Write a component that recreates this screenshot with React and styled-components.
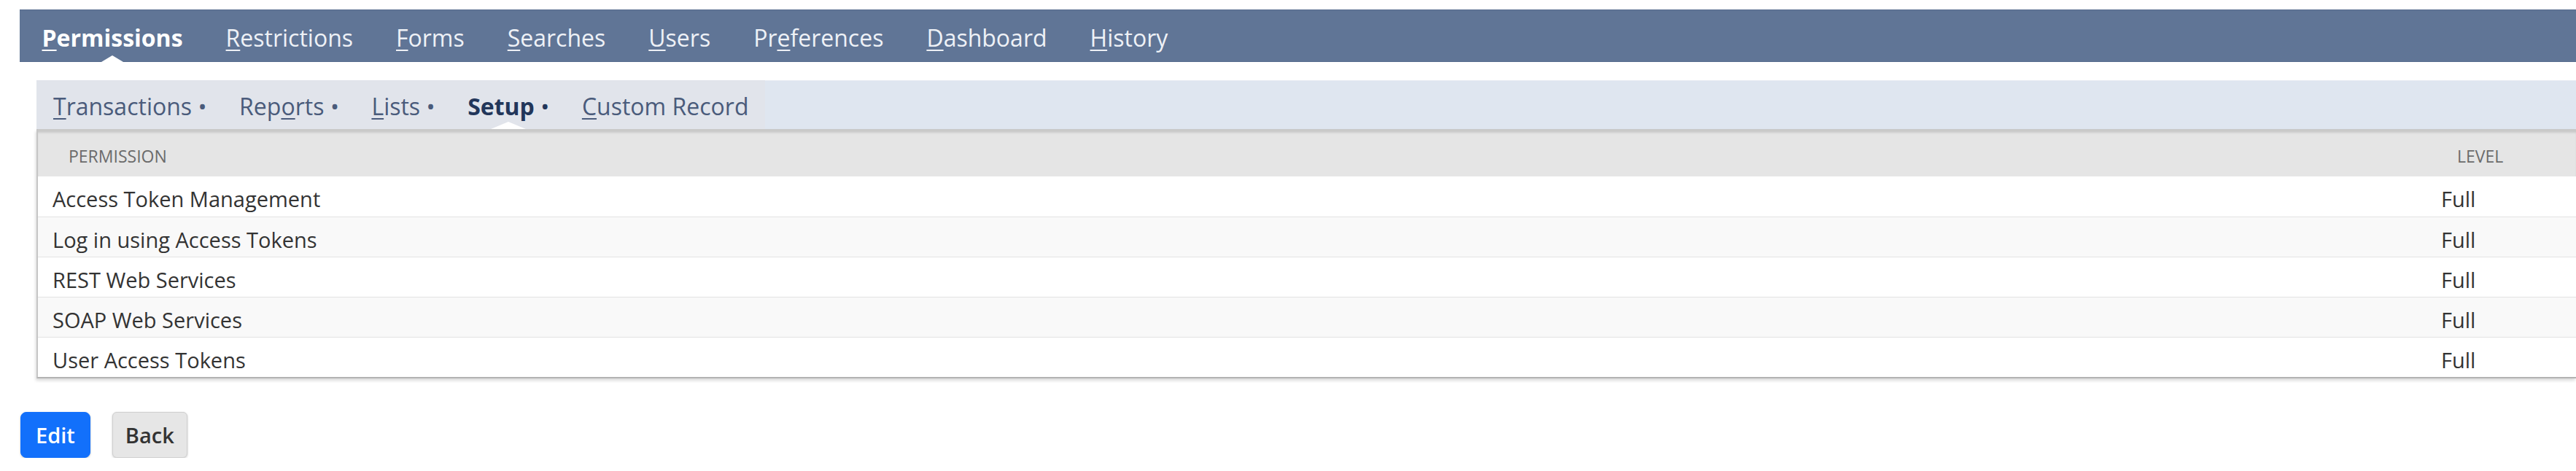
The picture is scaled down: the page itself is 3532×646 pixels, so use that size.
import React from "react";
import styled, { createGlobalStyle, css } from "styled-components";

const GlobalStyle = createGlobalStyle`
  html, body {
    margin: 0;
    padding: 0;
    background: #ffffff;
    overflow: hidden;
  }
  body {
    font-family: "Open Sans", "Liberation Sans", sans-serif;
  }
`;

const topTabs = [
  { label: "Permissions", key: 0, active: true },
  { label: "Restrictions", key: 0 },
  { label: "Forms", key: 0 },
  { label: "Searches", key: 0 },
  { label: "Users", key: 0 },
  { label: "Preferences", key: 2 },
  { label: "Dashboard", key: 0 },
  { label: "History", key: 0 },
];

const subTabs = [
  { label: "Transactions", key: 0, dot: true },
  { label: "Reports", key: 3, dot: true },
  { label: "Lists", key: 0, dot: true },
  { label: "Setup", key: -1, dot: true, active: true },
  { label: "Custom Record", key: 0 },
];

const permissions = [
  "Access Token Management",
  "Log in using Access Tokens",
  "REST Web Services",
  "SOAP Web Services",
  "User Access Tokens",
];

function withKey(label, key) {
  if (key < 0) return label;
  return (
    <>
      {label.slice(0, key)}
      <u>{label[key]}</u>
      {label.slice(key + 1)}
    </>
  );
}

function App() {
  return (
    <Page>
      <GlobalStyle />
      <NavBar>
        {topTabs.map((t) => (
          <NavItem key={t.label} $active={t.active}>
            {withKey(t.label, t.key)}
          </NavItem>
        ))}
      </NavBar>

      <Content>
        <SubBar>
          <SubTabs>
            {subTabs.map((t) => (
              <SubTab key={t.label} $active={t.active}>
                {withKey(t.label, t.key)}
                {t.dot && <Dot>•</Dot>}
              </SubTab>
            ))}
          </SubTabs>
        </SubBar>

        <Table>
          <HeaderRow>
            <HeaderCell>Permission</HeaderCell>
            <HeaderCell>Level</HeaderCell>
          </HeaderRow>
          {permissions.map((p, i) => (
            <Row key={p} $odd={i % 2 === 1} $first={i === 0}>
              <Cell>{p}</Cell>
              <Cell>Full</Cell>
            </Row>
          ))}
        </Table>
      </Content>

      <Buttons>
        <Button $primary>Edit</Button>
        <Button>Back</Button>
      </Buttons>
    </Page>
  );
}

export default App;

const Page = styled.div`
  padding: 13px 0 0 27px;
  font-family: "Open Sans", "Liberation Sans", sans-serif;
`;

const NavBar = styled.div`
  display: flex;
  height: 72px;
  padding-left: 1px;
  background: #607596;
  box-shadow: inset 0 1px 0 #566b8c, inset 0 -1px 0 #566b8c;
`;

const pointer = (w, h) => css`
  &::after {
    content: "";
    position: absolute;
    left: 50%;
    bottom: 0;
    transform: translateX(-50%);
    border-left: ${w / 2}px solid transparent;
    border-right: ${w / 2}px solid transparent;
    border-bottom: ${h}px solid #ffffff;
  }
`;

const NavItem = styled.div`
  position: relative;
  display: flex;
  align-items: center;
  padding: 4px 29.5px 0;
  font-size: 32px;
  white-space: nowrap;
  color: ${(p) => (p.$active ? "#ffffff" : "#eef1f6")};
  font-weight: ${(p) => (p.$active ? 700 : 400)};

  u {
    text-decoration-thickness: 2px;
    text-underline-offset: 4px;
  }

  ${(p) => p.$active && pointer(30, 9)}
`;

const Content = styled.div`
  margin: 25px 0 0 23px;
`;

const SubBar = styled.div`
  display: flex;
  height: 67px;
  background: #dfe6f0;
  box-shadow: inset 0 1px 0 #e8ecf3;
`;

const SubTabs = styled.div`
  display: flex;
  background: #e1e4eb;
`;

const SubTab = styled.div`
  position: relative;
  display: flex;
  align-items: center;
  padding: 3px 23px 0;
  font-size: 32px;
  white-space: nowrap;
  color: ${(p) => (p.$active ? "#22365a" : "#4a5b7b")};
  font-weight: ${(p) => (p.$active ? 700 : 400)};

  u {
    text-decoration-thickness: 2px;
    text-underline-offset: 4px;
  }

  ${(p) => p.$active && pointer(48, 10)}
`;

const Dot = styled.span`
  margin-left: 10px;
  font-size: 24px;
  font-weight: 700;
`;

const Table = styled.div`
  border-left: 2px solid #c6c6c6;
  border-bottom: 2px solid #b3b3b3;
  box-shadow: -1px 3px 4px rgba(0, 0, 0, 0.15);
`;

const HeaderRow = styled.div`
  display: grid;
  grid-template-columns: 1fr 205px;
  height: 65px;
  box-sizing: border-box;
  background: #e5e5e5;
  border-top: 3px solid #c9c9c9;
  box-shadow: inset 0 3px 3px -1px rgba(0, 0, 0, 0.12);
`;

const HeaderCell = styled.div`
  display: flex;
  align-items: center;
  padding: 6px 0 0 42px;
  font-size: 23px;
  color: #6b6b6b;
  text-transform: uppercase;
  white-space: nowrap;
`;

const Row = styled.div`
  display: grid;
  grid-template-columns: 1fr 205px;
  height: 55px;
  box-sizing: border-box;
  background: ${(p) => (p.$odd ? "#f9f9f9" : "#ffffff")};
  border-top: ${(p) => (p.$first ? "none" : "1px solid #e3e3e3")};
`;

const Cell = styled.div`
  display: flex;
  align-items: center;
  padding: 6px 20px 0;
  font-size: 29px;
  color: #333333;
  white-space: nowrap;
`;

const Buttons = styled.div`
  display: flex;
  gap: 30px;
  margin: 46px 0 0 1px;
`;

const Button = styled.button`
  height: 63px;
  padding: 0 ${(p) => (p.$primary ? "20px" : "17px")};
  font-family: "Open Sans", "Liberation Sans", sans-serif;
  font-size: 29px;
  font-weight: 600;
  cursor: pointer;
  border-radius: ${(p) => (p.$primary ? "8px" : "6px")};
  color: ${(p) => (p.$primary ? "#ffffff" : "#333333")};
  background: ${(p) => (p.$primary ? "#1270fb" : "#e6e6e6")};
  border: 1px solid ${(p) => (p.$primary ? "#1270fb" : "#cfcfcf")};
  box-shadow: 0 1px 3px rgba(0, 0, 0, 0.2);
`;
